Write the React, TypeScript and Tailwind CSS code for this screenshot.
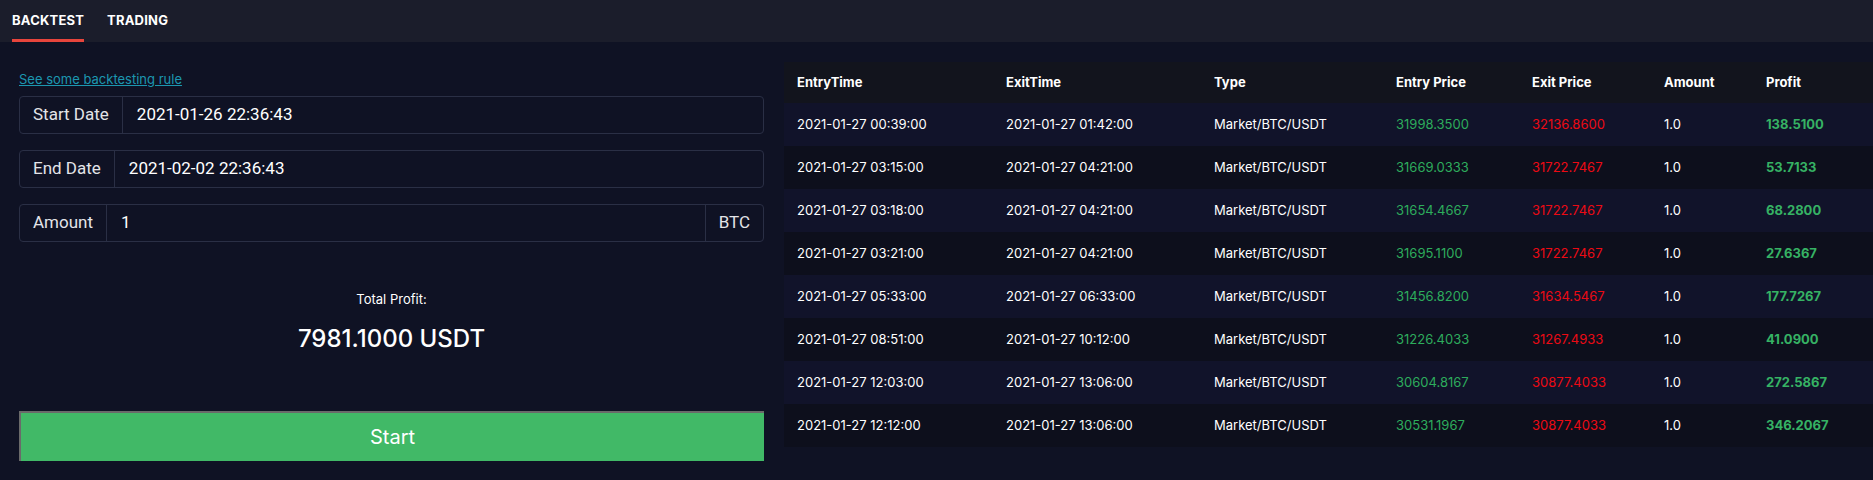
import React from 'react';

interface Trade {
  entryTime: string;
  exitTime: string;
  type: string;
  entryPrice: string;
  exitPrice: string;
  amount: string;
  profit: string;
}

const trades: Trade[] = [
  { entryTime: '2021-01-27 00:39:00', exitTime: '2021-01-27 01:42:00', type: 'Market/BTC/USDT', entryPrice: '31998.3500', exitPrice: '32136.8600', amount: '1.0', profit: '138.5100' },
  { entryTime: '2021-01-27 03:15:00', exitTime: '2021-01-27 04:21:00', type: 'Market/BTC/USDT', entryPrice: '31669.0333', exitPrice: '31722.7467', amount: '1.0', profit: '53.7133' },
  { entryTime: '2021-01-27 03:18:00', exitTime: '2021-01-27 04:21:00', type: 'Market/BTC/USDT', entryPrice: '31654.4667', exitPrice: '31722.7467', amount: '1.0', profit: '68.2800' },
  { entryTime: '2021-01-27 03:21:00', exitTime: '2021-01-27 04:21:00', type: 'Market/BTC/USDT', entryPrice: '31695.1100', exitPrice: '31722.7467', amount: '1.0', profit: '27.6367' },
  { entryTime: '2021-01-27 05:33:00', exitTime: '2021-01-27 06:33:00', type: 'Market/BTC/USDT', entryPrice: '31456.8200', exitPrice: '31634.5467', amount: '1.0', profit: '177.7267' },
  { entryTime: '2021-01-27 08:51:00', exitTime: '2021-01-27 10:12:00', type: 'Market/BTC/USDT', entryPrice: '31226.4033', exitPrice: '31267.4933', amount: '1.0', profit: '41.0900' },
  { entryTime: '2021-01-27 12:03:00', exitTime: '2021-01-27 13:06:00', type: 'Market/BTC/USDT', entryPrice: '30604.8167', exitPrice: '30877.4033', amount: '1.0', profit: '272.5867' },
  { entryTime: '2021-01-27 12:12:00', exitTime: '2021-01-27 13:06:00', type: 'Market/BTC/USDT', entryPrice: '30531.1967', exitPrice: '30877.4033', amount: '1.0', profit: '346.2067' },
];

const headers = ['EntryTime', 'ExitTime', 'Type', 'Entry Price', 'Exit Price', 'Amount', 'Profit'];

// Campo com rótulo à esquerda (e sufixo opcional)
const Field: React.FC<{ label: string; value: string; suffix?: string }> = ({ label, value, suffix }) => (
  <div className="flex h-[38px] border border-[#2a2f45] rounded-[4px] text-[17px] font-['Roboto',sans-serif]">
    <div className="flex items-center px-[13px] border-r border-[#2a2f45] text-[#e3e4e8]">{label}</div>
    <div className="flex-1 flex items-center px-[14px] text-white">{value}</div>
    {suffix && (
      <div className="flex items-center px-[13px] border-l border-[#2a2f45] text-[#e3e4e8]">{suffix}</div>
    )}
  </div>
);

const App: React.FC = () => {
  return (
    <div className="w-[1873px] h-[480px] bg-[#0f1224] font-['Inter',sans-serif] text-white overflow-hidden">
      {/* Abas */}
      <div className="h-[42px] bg-[#1b1d2b] flex items-stretch px-[12px] gap-[23px]">
        <div className="flex flex-col justify-center relative text-[13px] font-bold tracking-[0.2px]">
          BACKTEST
          <span className="absolute left-0 right-0 bottom-0 h-[3px] bg-[#e8453c]" />
        </div>
        <div className="flex flex-col justify-center text-[13px] font-bold tracking-[0.2px]">TRADING</div>
      </div>

      <div className="flex">
        {/* Formulário */}
        <div className="w-[764px] pl-[19px] flex flex-col">
          <a href="#" className="mt-[29px] leading-[16px] text-[13px] text-[#1c97b0] underline">See some backtesting rule</a>
          <div className="mt-[9px] flex flex-col gap-[16px]">
            <Field label="Start Date" value="2021-01-26 22:36:43" />
            <Field label="End Date" value="2021-02-02 22:36:43" />
            <Field label="Amount" value="1" suffix="BTC" />
          </div>
          <div className="mt-[49px] text-center text-[13px] leading-[16px]">Total Profit:</div>
          <div className="mt-[16px] text-center text-[24px] leading-[32px] font-medium">7981.1000 USDT</div>
          <button className="mt-[56px] h-[50px] bg-[#41b967] border-t-2 border-l-2 border-[#6a6a6a] text-[20px] text-white">
            Start
          </button>
        </div>

        {/* Tabela de operações */}
        <div className="ml-[20px] mt-[20px] flex-1">
          <div className="grid grid-cols-[209px_208px_182px_136px_132px_102px_1fr] h-[41px] bg-[#12141d] items-center text-[13px] font-bold">
            {headers.map((h) => (
              <div key={h} className="pl-[13px]">{h}</div>
            ))}
          </div>
          {trades.map((t, i) => (
            <div
              key={i}
              className={`grid grid-cols-[209px_208px_182px_136px_132px_102px_1fr] h-[43px] items-center text-[13px] ${i % 2 === 0 ? 'bg-[#11132a]' : 'bg-[#0d0f1c]'}`}
            >
              <div className="pl-[13px]">{t.entryTime}</div>
              <div className="pl-[13px]">{t.exitTime}</div>
              <div className="pl-[13px]">{t.type}</div>
              <div className="pl-[13px] text-[#2dac5c]">{t.entryPrice}</div>
              <div className="pl-[13px] text-[#ec0a14]">{t.exitPrice}</div>
              <div className="pl-[13px]">{t.amount}</div>
              <div className="pl-[13px] text-[#36b264] font-bold">{t.profit}</div>
            </div>
          ))}
        </div>
      </div>
    </div>
  );
};

export default App;
